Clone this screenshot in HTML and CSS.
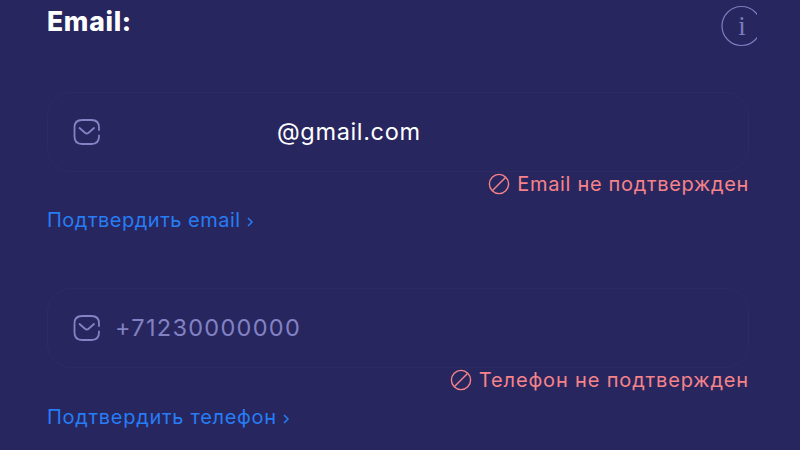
FILE: index.html
```html
<!DOCTYPE html>
<html lang="ru">
<head>
    <meta charset="UTF-8">
    <meta name="viewport" content="width=device-width, initial-scale=1.0">
    <title>Email</title>
    <link rel="stylesheet" href="styles.css">
</head>
<body>
    <div class="container">
        <div class="header">
            <h1>Email:</h1>
            <svg class="info-icon" width="36" height="42" viewBox="0 0 36 42" fill="none">
                <circle cx="20.5" cy="21" r="19.5" stroke="#7c7cc0" stroke-width="1.2"/>
                <text x="21" y="30" text-anchor="middle">i</text>
            </svg>
        </div>

        <div class="form-group">
            <div class="field">
                <svg class="mail-icon" width="28" height="28" viewBox="0 0 28 28" fill="none">
                    <path d="M26 12V9.5Q26 2 18.5 2H9Q1.5 2 1.5 9.5V18.5Q1.5 26 9 26H18.5Q26 26 26 18.5V17.5"/>
                    <path d="M6.5 10L12 14.7Q13.8 16.2 15.6 14.7L21 10"/>
                </svg>
                <span class="value email">@gmail.com</span>
            </div>
            <div class="status status-email">
                <svg class="ban-icon" width="22" height="22" viewBox="0 0 22 22" fill="none">
                    <circle cx="11" cy="11" r="9.6"/>
                    <path d="M4.5 17.5L17.5 4.5"/>
                </svg>
                <span>Email не подтвержден</span>
            </div>
            <a class="confirm confirm-email" href="#">
                <span>Подтвердить email</span>
                <svg width="7" height="12" viewBox="0 0 7 12" fill="none"><path d="M1 2L5 6L1 10"/></svg>
            </a>
        </div>

        <div class="form-group">
            <div class="field">
                <svg class="mail-icon" width="28" height="28" viewBox="0 0 28 28" fill="none">
                    <path d="M26 12V9.5Q26 2 18.5 2H9Q1.5 2 1.5 9.5V18.5Q1.5 26 9 26H18.5Q26 26 26 18.5V17.5"/>
                    <path d="M6.5 10L12 14.7Q13.8 16.2 15.6 14.7L21 10"/>
                </svg>
                <span class="value phone">+71230000000</span>
            </div>
            <div class="status status-phone">
                <svg class="ban-icon" width="22" height="22" viewBox="0 0 22 22" fill="none">
                    <circle cx="11" cy="11" r="9.6"/>
                    <path d="M4.5 17.5L17.5 4.5"/>
                </svg>
                <span>Телефон не подтвержден</span>
            </div>
            <a class="confirm confirm-phone" href="#">
                <span>Подтвердить телефон</span>
                <svg width="7" height="12" viewBox="0 0 7 12" fill="none"><path d="M1 2L5 6L1 10"/></svg>
            </a>
        </div>
    </div>
</body>
</html>
```

FILE: styles.css
```css
* {
    margin: 0;
    padding: 0;
    box-sizing: border-box;
}

body {
    font-family: Inter, 'Open Sans', sans-serif;
    background: #28265f;
}

.container {
    width: 702px;
    margin-left: 47px;
}

.header {
    display: flex;
    justify-content: space-between;
    height: 92px;
    padding-top: 5px;
    margin-right: -8px;
}

h1 {
    color: #fff;
    font-size: 26.5px;
    line-height: 32px;
    font-weight: 800;
    letter-spacing: 0.7px;
}

.info-icon text {
    font-family: 'Liberation Serif', serif;
    font-size: 27px;
    fill: #7c7cc0;
}

.form-group + .form-group {
    margin-top: 56px;
}

.field {
    display: flex;
    align-items: center;
    height: 80px;
    padding-left: 25px;
    border: 1px solid #2d2b64;
    border-radius: 24px;
}

.mail-icon {
    stroke: #8483c5;
    stroke-width: 1.8;
    stroke-linecap: round;
    stroke-linejoin: round;
}

.value {
    font-size: 23.5px;
    line-height: 30px;
    white-space: nowrap;
}

.email {
    color: #fff;
    margin-left: 176px;
    letter-spacing: 0.65px;
}

.phone {
    color: #8281c4;
    margin-left: 14px;
    letter-spacing: 1.3px;
}

.status {
    display: flex;
    align-items: center;
    justify-content: flex-end;
    gap: 7px;
    height: 24px;
    color: #f58389;
    font-size: 20px;
    line-height: 24px;
    white-space: nowrap;
}

.status-email {
    letter-spacing: 0.68px;
}

.status-phone {
    letter-spacing: 0.85px;
}

.ban-icon {
    stroke: #f58389;
    stroke-width: 1.4;
}

.confirm {
    display: flex;
    align-items: center;
    gap: 6px;
    width: max-content;
    height: 24px;
    margin-top: 12px;
    color: #267df5;
    font-size: 20px;
    line-height: 24px;
    text-decoration: none;
}

.confirm-email {
    letter-spacing: 0.5px;
}

.confirm-phone {
    margin-top: 13px;
    letter-spacing: 0.7px;
}

.confirm svg {
    margin-top: 4px;
    stroke: #267df5;
    stroke-width: 1.5;
}
```
